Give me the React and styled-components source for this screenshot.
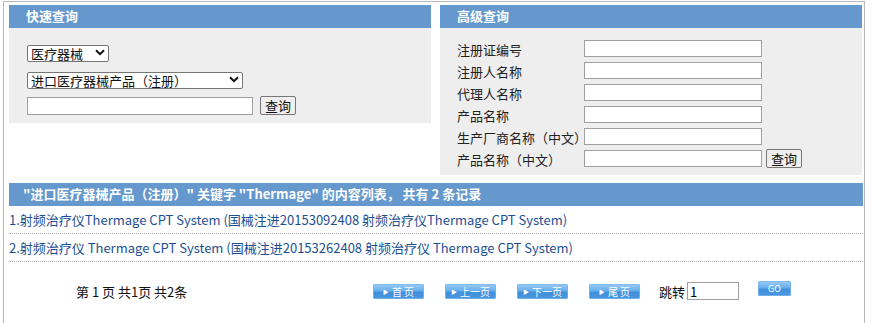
import React from "react";
import styled, { createGlobalStyle } from "styled-components";

const Global = createGlobalStyle`
  html, body { margin: 0; padding: 0; background: #fff; }
  body { font-family: "Noto Sans CJK SC", "Microsoft YaHei", sans-serif; font-size: 13px; color: #222; }
`;

const Page = styled.div`
  margin-left: 3px;
  margin-top: 1px;
  width: 862px;
  height: 330px;
  border-top: 1px solid #b8b8b8;
  border-left: 1px solid #b8b8b8;
  border-right: 1px solid #b8b8b8;
  box-sizing: border-box;
  padding: 3px 0 0 5px;
`;

const Top = styled.div`
  display: flex;
  align-items: flex-start;
  gap: 9px;
`;

const Panel = styled.div`
  width: 422px;
  display: flex;
  flex-direction: column;
`;

const Header = styled.div`
  height: 23px;
  background: #6598cc;
  color: #fff;
  font-weight: bold;
  font-size: 13px;
  line-height: 22px;
  padding-left: ${(p) => p.$pl || 17}px;
  white-space: nowrap;
`;

const QuickBody = styled.div`
  background: #eeeeee;
  height: 95px;
  box-sizing: border-box;
  padding: 16px 0 0 18px;
  display: flex;
  flex-direction: column;
  gap: 10px;
`;

const SelectWrap = styled.div`
  position: relative;
  width: ${(p) => p.$w}px;
  height: 17px;
`;

const Select = styled.select`
  appearance: none;
  width: 100%;
  height: 17px;
  box-sizing: border-box;
  border: 1px solid #767676;
  border-radius: 2px;
  background: #fff;
  font-family: "Noto Sans CJK SC", sans-serif;
  font-size: 13px;
  line-height: 15px;
  padding: 0 0 0 3px;
  color: #111;
  outline: none;
`;

const Chevron = styled.svg`
  position: absolute;
  right: 4px;
  top: 5px;
  width: 10px;
  height: 7px;
  pointer-events: none;
`;

const Row = styled.div`
  display: flex;
  align-items: center;
  gap: ${(p) => p.$gap || 7}px;
`;

const TextInput = styled.input`
  width: ${(p) => p.$w}px;
  height: ${(p) => p.$h || 18}px;
  box-sizing: border-box;
  border: 1px solid #a0a0a0;
  background: #fff;
  padding: 0 2px;
  font-family: "Noto Sans CJK SC", sans-serif;
  font-size: 13px;
  outline: none;
  margin: 0;
`;

const Button = styled.button`
  height: 19px;
  width: 36px;
  box-sizing: border-box;
  border: 1px solid #767676;
  border-radius: 2px;
  background: #efefef;
  font-family: "Noto Sans CJK SC", sans-serif;
  font-size: 13px;
  line-height: 15px;
  padding: 0;
  color: #111;
  margin: 0;
`;

const AdvBody = styled.div`
  background: #eeeeee;
  height: 147px;
  box-sizing: border-box;
  padding: 12px 0 0 17px;
  display: grid;
  grid-template-columns: 127px auto;
  grid-auto-rows: 17px;
  row-gap: 5px;
  align-items: center;
`;

const Label = styled.div`
  font-size: 13px;
  line-height: 17px;
  color: #222;
  white-space: nowrap;
  padding-top: 2px;
`;

const Results = styled.div`
  margin-top: 8px;
  width: 854px;
`;

const ResultRow = styled.div`
  height: 27px;
  border-bottom: 1px dotted #b0b0b0;
  display: flex;
  align-items: center;
  font-size: 13px;
  color: #1b4f93;
  white-space: nowrap;
  box-sizing: content-box;
`;

const Pager = styled.div`
  display: flex;
  align-items: center;
  height: 58px;
  padding-left: 67px;
  font-family: "Noto Sans CJK SC", sans-serif;
  font-size: 13px;
  color: #111;
`;

const PagerInfo = styled.div`
  width: 297px;
  white-space: nowrap;
`;

const ImgBtn = styled.div`
  width: 51px;
  height: 15px;
  margin-right: ${(p) => p.$mr || 21}px;
  border-radius: 2px;
  background: linear-gradient(to bottom, #9ccdf5 0%, #66aeec 45%, #3f8fdc 55%, #4c98e0 100%);
  box-shadow: inset 0 0 0 1px rgba(120, 180, 235, 0.8);
  color: #fff;
  font-size: 10px;
  line-height: 15px;
  display: flex;
  align-items: center;
  justify-content: center;
  gap: 3px;
  font-family: "Noto Sans CJK SC", sans-serif;
  white-space: nowrap;
`;

const Tri = styled.span`
  font-size: 6px;
  line-height: 15px;
`;

const Jump = styled.div`
  display: flex;
  align-items: center;
  gap: 2px;
  margin-right: 19px;
`;

const GoBtn = styled(ImgBtn)`
  width: 33px;
  height: 15px;
  margin-right: 0;
  margin-top: -6px;
  font-size: 9px;
`;

const ChevronIcon = () => (
  <Chevron viewBox="0 0 10 7">
    <path d="M1 1.2 L5 5.2 L9 1.2" fill="none" stroke="#111" strokeWidth="2" />
  </Chevron>
);

const advFields = [
  "注册证编号",
  "注册人名称",
  "代理人名称",
  "产品名称",
  "生产厂商名称（中文）",
  "产品名称（中文）",
];

const results = [
  "1.射频治疗仪Thermage CPT System (国械注进20153092408 射频治疗仪Thermage CPT System)",
  "2.射频治疗仪 Thermage CPT System (国械注进20153262408 射频治疗仪 Thermage CPT System)",
];

const pages = ["首 页", "上一页", "下一页", "尾 页"];

export default function App() {
  return (
    <>
      <Global />
      <Page>
        <Top>
          <Panel>
            <Header>快速查询</Header>
            <QuickBody>
              <SelectWrap $w={82}>
                <Select defaultValue="a">
                  <option value="a">医疗器械</option>
                </Select>
                <ChevronIcon />
              </SelectWrap>
              <SelectWrap $w={216}>
                <Select defaultValue="b">
                  <option value="b">进口医疗器械产品（注册）</option>
                </Select>
                <ChevronIcon />
              </SelectWrap>
              <Row style={{ marginTop: -2 }}>
                <TextInput $w={226} />
                <Button>查询</Button>
              </Row>
            </QuickBody>
          </Panel>
          <Panel>
            <Header>高级查询</Header>
            <AdvBody>
              {advFields.map((f, i) => (
                <React.Fragment key={f}>
                  <Label>{f}</Label>
                  <Row $gap={4}>
                    <TextInput $w={178} $h={17} />
                    {i === advFields.length - 1 && <Button style={{ height: 19 }}>查询</Button>}
                  </Row>
                </React.Fragment>
              ))}
            </AdvBody>
          </Panel>
        </Top>
        <Results>
          <Header $pl={14}>"进口医疗器械产品（注册）" 关键字 "Thermage" 的内容列表， 共有 2 条记录</Header>
          {results.map((r) => (
            <ResultRow key={r}>{r}</ResultRow>
          ))}
        </Results>
        <Pager>
          <PagerInfo>第 1 页 共1页 共2条</PagerInfo>
          {pages.map((p, i) => (
            <ImgBtn key={p} $mr={i === 3 ? 19 : 21}>
              <Tri>▶</Tri>
              {p}
            </ImgBtn>
          ))}
          <Jump>
            跳转
            <TextInput $w={52} $h={18} defaultValue="1" />
          </Jump>
          <GoBtn>GO</GoBtn>
        </Pager>
      </Page>
    </>
  );
}
